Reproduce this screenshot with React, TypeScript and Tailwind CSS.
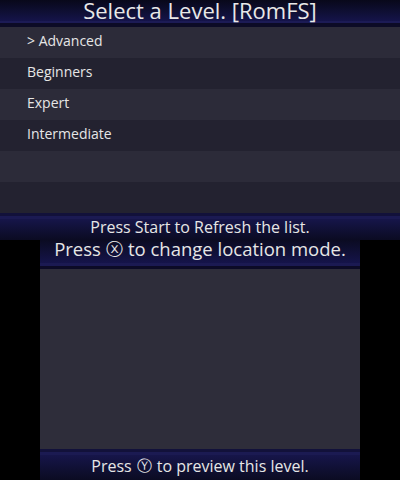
import React from 'react';

const levels = ['> Advanced', 'Beginners', 'Expert', 'Intermediate', '', ''];

const font = { fontFamily: '"Open Sans", "Noto Sans", sans-serif' };
const glyph = { fontFamily: '"DejaVu Sans", sans-serif' };

export default function App() {
  return (
    <div className="w-[400px] h-[480px] bg-black flex flex-col text-[#e6e6e6]" style={font}>
      {/* Top screen */}
      <div className="h-[240px] flex flex-col">
        <div className="h-[27px] flex flex-col relative">
          <div className="h-[21px] bg-gradient-to-b from-[#08081a] to-[#15144a]" />
          <div className="h-[2px] bg-[#1c1b55]" />
          <div className="h-[4px] bg-[#0c0b26]" />
          <div className="absolute inset-0 flex items-start justify-center text-[22px] leading-[22px] text-[#e8e8e8] whitespace-nowrap">
            <span className="-mt-[1px]">Select a Level. [RomFS]</span>
          </div>
        </div>
        <div className="flex flex-col">
          {levels.map((name, i) => (
            <div
              key={i}
              className={`h-[31px] flex items-center pl-[27px] pb-[4px] text-[14px] ${i % 2 === 0 ? 'bg-[#2c2b39]' : 'bg-[#232230]'}`}
            >
              {name}
            </div>
          ))}
        </div>
        <div className="h-[27px] flex flex-col relative">
          <div className="h-[3px] bg-[#12113a]" />
          <div className="h-[3px] bg-[#1b1a52]" />
          <div className="flex-1 bg-gradient-to-b from-[#16154a] to-[#0b0b22]" />
          <div className="absolute inset-0 flex items-center justify-center text-[16px] leading-none">
            Press Start to Refresh the list.
          </div>
        </div>
      </div>
      {/* Bottom screen */}
      <div className="h-[240px] flex justify-center">
        <div className="w-[320px] flex flex-col">
          <div className="h-[29px] relative flex flex-col">
            <div className="flex-1 bg-gradient-to-b from-[#0b0b22] to-[#15144a]" />
            <div className="h-[3px] bg-[#1b1a52]" />
            <div className="h-[3px] bg-[#0c0b26]" />
            <div className="absolute inset-0 flex items-start justify-center text-[18.5px] leading-[18px] whitespace-nowrap">
              Press <span className="mx-[5px] text-[17px]" style={glyph}>ⓧ</span> to change location mode.
            </div>
          </div>
          <div className="flex-1 bg-[#2e2d3a]" />
          <div className="h-[31px] relative flex flex-col">
            <div className="h-[3px] bg-[#12113a]" />
            <div className="h-[3px] bg-[#1b1a52]" />
            <div className="flex-1 bg-gradient-to-b from-[#16154a] to-[#0b0b22]" />
            <div className="absolute inset-0 flex items-center justify-center pt-[3px] text-[16px] leading-none whitespace-nowrap">
              Press <span className="mx-[5px] text-[15px]" style={glyph}>Ⓨ</span> to preview this level.
            </div>
          </div>
        </div>
      </div>
    </div>
  );
}
